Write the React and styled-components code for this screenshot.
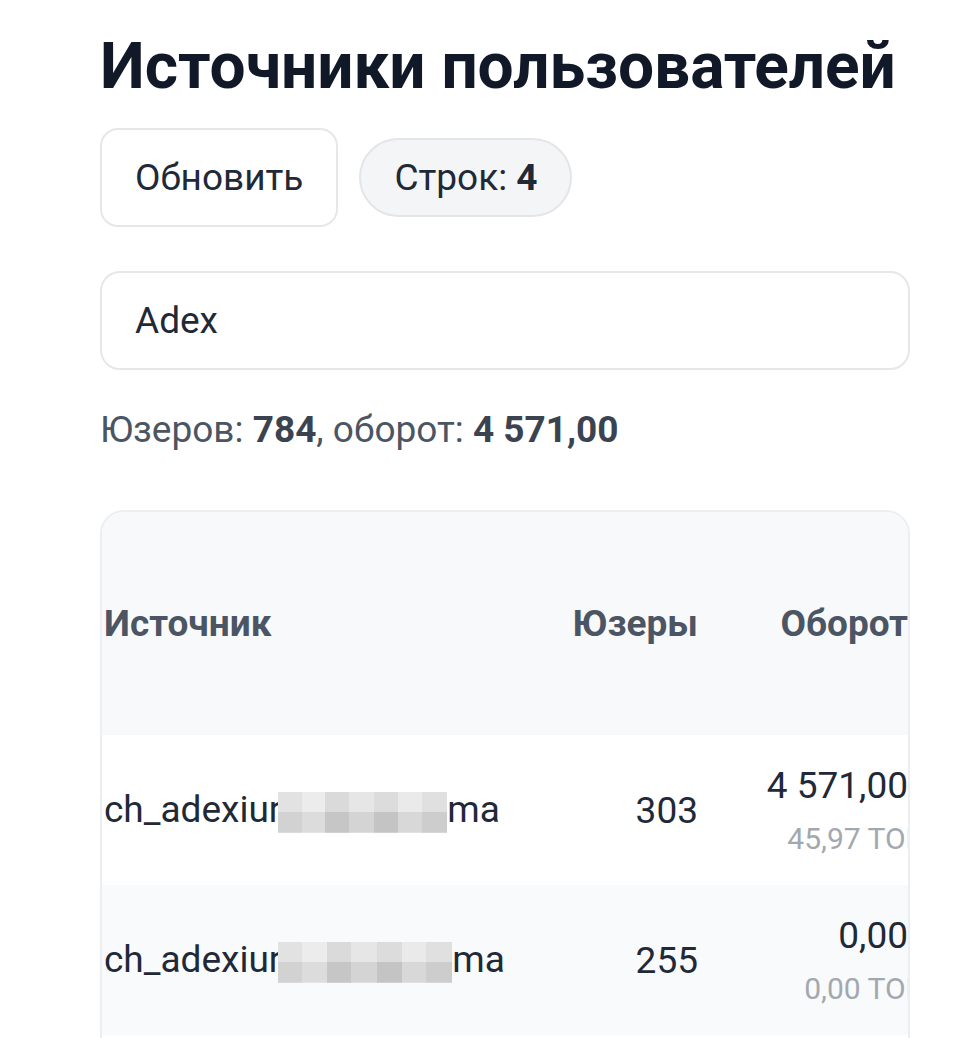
import React from 'react';
import styled, { createGlobalStyle } from 'styled-components';

const GlobalStyle = createGlobalStyle`
  body {
    margin: 0;
    background: #ffffff;
    font-family: Roboto, "Noto Sans", sans-serif;
    color: #1f2937;
  }
`;

const Page = styled.div`
  width: 810px;
  margin-left: 100px;
  padding-top: 27px;
`;

const Title = styled.h1`
  margin: 0;
  font-size: 64px;
  font-weight: 700;
  line-height: 80px;
  color: #111827;
  letter-spacing: -0.05px;
  white-space: nowrap;
`;

const Toolbar = styled.div`
  display: flex;
  align-items: center;
  gap: 21px;
  margin-top: 21px;
`;

const Button = styled.button`
  box-sizing: border-box;
  height: 99px;
  padding: 0 33px;
  border: 2px solid #e5e7eb;
  border-radius: 18px;
  background: #ffffff;
  font-family: inherit;
  font-size: 37px;
  color: #1f2937;
`;

const Pill = styled.div`
  box-sizing: border-box;
  height: 79px;
  display: flex;
  align-items: center;
  padding: 0 33px;
  border: 2px solid #e3e5e8;
  border-radius: 40px;
  background: #f4f5f7;
  font-size: 37px;
  color: #1f2937;

  b {
    font-weight: 700;
    margin-left: 9px;
  }
`;

const Search = styled.input`
  display: block;
  box-sizing: border-box;
  width: 100%;
  height: 99px;
  margin-top: 44px;
  padding: 0 33px;
  border: 2px solid #e5e7eb;
  border-radius: 20px;
  font-family: inherit;
  font-size: 37px;
  color: #1f2937;
  outline: none;
`;

const Summary = styled.div`
  margin-top: 38px;
  font-size: 37px;
  line-height: 44px;
  color: #4b5563;

  b {
    font-weight: 700;
    color: #3b4350;
  }
`;

const Card = styled.div`
  margin-top: 58px;
  border: 2px solid #eceef1;
  border-radius: 24px;
  overflow: hidden;
`;

const Row = styled.div`
  display: grid;
  grid-template-columns: 1fr 160px 210px;
  align-items: center;
  height: ${({ $h }) => $h}px;
  background: ${({ $bg }) => $bg};
`;

const Head = styled.div`
  font-size: 37px;
  font-weight: 700;
  color: #4b5563;
  white-space: nowrap;
  text-align: ${({ $right }) => ($right ? 'right' : 'left')};
  padding-left: ${({ $first }) => ($first ? '2px' : '0')};
`;

const Cell = styled.div`
  font-size: 37px;
  line-height: 43px;
  color: #1f2937;
  white-space: nowrap;
  text-align: ${({ $right }) => ($right ? 'right' : 'left')};
  padding-left: ${({ $first }) => ($first ? '2px' : '0')};
`;

const Amount = styled.div`
  display: flex;
  flex-direction: column;
  align-items: flex-end;
  gap: 14px;
`;

const Sub = styled.span`
  font-size: 30px;
  line-height: 35px;
  color: #a3a8b0;
  margin-right: -19px;
  white-space: nowrap;
`;

// pixelated blur covering part of a source name
const Redacted = styled.span`
  display: inline-block;
  width: ${({ $w }) => $w}px;
  height: 41px;
  margin-left: -3px;
  vertical-align: -11px;
  background:
    linear-gradient(
      90deg,
      #d2d2d2 0 14%,
      #dcdcdc 14% 28%,
      #c6c6c6 28% 42%,
      #d4d4d4 42% 57%,
      #c4c4c4 57% 71%,
      #d8d8d8 71% 85%,
      #cdcdcd 85% 100%
    ) bottom / 100% 50% no-repeat,
    linear-gradient(
      90deg,
      #e2e2e2 0 14%,
      #ececec 14% 28%,
      #dadada 28% 42%,
      #e6e6e6 42% 57%,
      #dcdcdc 57% 71%,
      #eaeaea 71% 85%,
      #e0e0e0 85% 100%
    );
`;

const rows = [
  { users: 303, amount: '4 571,00', ton: '45,97 TON', w: 169 },
  { users: 255, amount: '0,00', ton: '0,00 TON', w: 174 },
  { users: 148, amount: '0,00', ton: '0,00 TON', w: 160 },
  { users: 78, amount: '0,00', ton: '0,00 TON', w: 150 },
];

export default function App() {
  return (
    <>
      <GlobalStyle />
      <Page>
        <Title>Источники пользователей</Title>
        <Toolbar>
          <Button>Обновить</Button>
          <Pill>
            Строк:<b>4</b>
          </Pill>
        </Toolbar>
        <Search defaultValue="Adex" />
        <Summary>
          Юзеров: <b>784</b>, оборот: <b>4 571,00</b>
        </Summary>
        <Card>
          <Row $h={223} $bg="#f8f9fa">
            <Head $first>Источник</Head>
            <Head $right>Юзеры</Head>
            <Head $right>Оборот</Head>
          </Row>
          {rows.map((r, i) => (
            <Row key={i} $h={150} $bg={i % 2 ? '#f9fafb' : '#ffffff'}>
              <Cell $first>
                ch_adexiur<Redacted $w={r.w} />ma
              </Cell>
              <Cell $right>{r.users}</Cell>
              <Amount>
                <Cell $right>{r.amount}</Cell>
                <Sub>{r.ton}</Sub>
              </Amount>
            </Row>
          ))}
        </Card>
      </Page>
    </>
  );
}
